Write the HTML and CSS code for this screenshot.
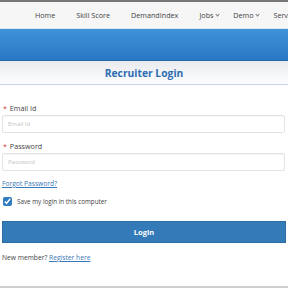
FILE: index.html
```html
<!DOCTYPE html>
<html lang="en">
<head>
    <meta charset="UTF-8">
    <title>Recruiter Login</title>
    <link rel="stylesheet" href="styles.css">
</head>
<body>
    <div class="topline"></div>
    <nav class="navbar">
        <a href="#">Home</a>
        <a href="#">Skill Score</a>
        <a href="#">DemandIndex</a>
        <a href="#" class="drop">Jobs <span class="caret"></span></a>
        <a href="#" class="drop">Demo <span class="caret"></span></a>
        <a href="#">Services</a>
    </nav>
    <div class="banner"></div>

    <div class="panel-head">
        <h1>Recruiter Login</h1>
    </div>

    <form class="login-form">
        <label class="field-label"><span class="req">*</span> Email Id</label>
        <input type="text" class="field" placeholder="Email Id">

        <label class="field-label"><span class="req">*</span> Password</label>
        <input type="password" class="field" placeholder="Password">

        <a href="#" class="forgot">Forgot Password?</a>

        <label class="remember">
            <input type="checkbox" checked>
            Save my login in this computer
        </label>

        <button type="button" class="btn-login">Login</button>

        <p class="signup">New member? <a href="#">Register here</a></p>
    </form>

    <div class="bottomline"></div>
</body>
</html>
```

FILE: styles.css
```css
* {
    margin: 0;
    padding: 0;
    box-sizing: border-box;
}

html, body {
    height: 100%;
    overflow: hidden;
}

body {
    background: #fff;
    font-family: 'Open Sans', 'DejaVu Sans', sans-serif;
    color: #333;
    display: flex;
    flex-direction: column;
}

.topline {
    height: 2px;
    background: #777;
}

.navbar {
    height: 27px;
    background: #f6f6f6;
    display: flex;
    align-items: center;
    gap: 21px;
    padding-left: 35px;
    white-space: nowrap;
    overflow: hidden;
    border-bottom: 1px solid #dfe6ee;
}

.navbar a {
    color: #444;
    text-decoration: none;
    font-size: 7.2px;
}

.navbar .drop {
    margin-right: -7px;
}

.caret {
    display: inline-block;
    width: 3px;
    height: 3px;
    border-right: 1px solid #777;
    border-bottom: 1px solid #777;
    transform: rotate(45deg);
    margin: 0 0 2px 1px;
}

.banner {
    height: 32px;
    background: linear-gradient(#3d92d8, #2a78c4);
    border-bottom: 1px solid #2468ad;
}

.panel-head {
    height: 24px;
    background: linear-gradient(#e8ebee, #fdfdfe);
    border-bottom: 1px solid #c3d6ea;
    display: flex;
    align-items: center;
    justify-content: center;
}

.panel-head h1 {
    font-size: 10.3px;
    font-weight: 700;
    color: #2f6db3;
}

.login-form {
    display: flex;
    flex-direction: column;
    padding: 18px 2px 0;
}

.field-label {
    font-size: 7.2px;
    color: #444;
    padding-left: 1px;
    margin-bottom: 2px;
}

.req {
    color: #d0413c;
    margin-right: 1px;
}

.field {
    height: 18px;
    border: 1px solid #e3e3e3;
    border-radius: 2px;
    box-shadow: inset 0 1px 1px rgba(0, 0, 0, 0.04);
    padding: 0 5px;
    font-family: inherit;
    font-size: 6px;
    color: #555;
    margin-bottom: 8px;
    margin-right: 1px;
}

.field::placeholder {
    color: #c4c4c4;
}

.forgot {
    font-size: 6.7px;
    color: #3a79b8;
    align-self: flex-start;
}

.remember {
    display: flex;
    align-items: center;
    gap: 5px;
    font-size: 6.3px;
    color: #444;
    margin-top: 9px;
    padding-left: 1px;
}

.remember input {
    width: 9px;
    height: 9px;
    accent-color: #2f7ac0;
    margin: 0;
}

.btn-login {
    margin-top: 15px;
    height: 22px;
    background: #3479b8;
    border: 1px solid #2e6da6;
    color: #fff;
    font-family: inherit;
    font-weight: 700;
    font-size: 7.5px;
}

.signup {
    font-size: 6.7px;
    color: #444;
    margin-top: 10px;
}

.signup a {
    color: #3a79b8;
}

.bottomline {
    margin-top: auto;
    height: 2px;
    background: #cfcfcf;
}
```
